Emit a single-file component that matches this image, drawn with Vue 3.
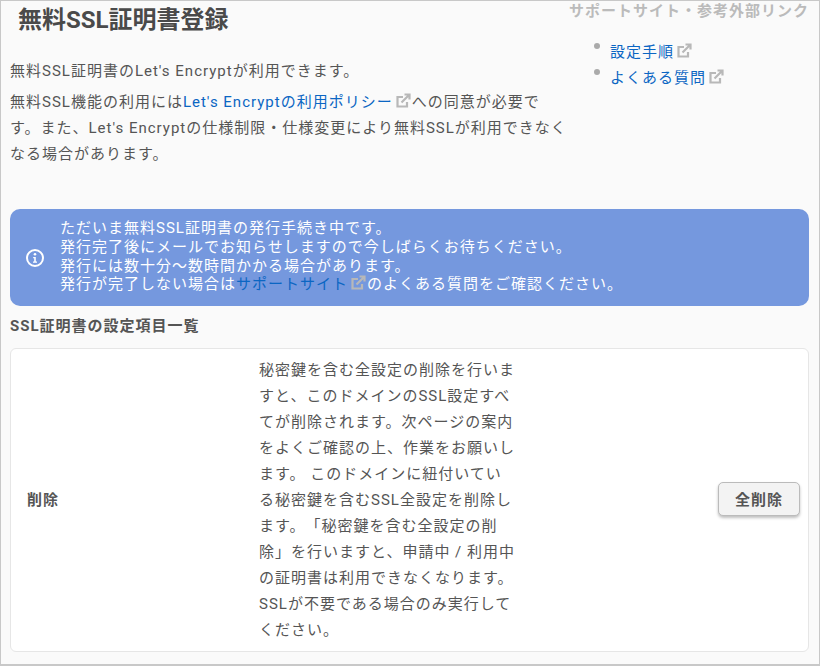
<script setup>
const links = ['設定手順', 'よくある質問']
const notices = [
  'ただいま無料SSL証明書の発行手続き中です。',
  '発行完了後にメールでお知らせしますので今しばらくお待ちください。',
  '発行には数十分〜数時間かかる場合があります。'
]
</script>

<template>
  <div class="page">
    <div class="top">
      <div class="intro">
        <h1 class="title">無料SSL証明書登録</h1>
        <p class="p1">無料SSL証明書のLet's Encryptが利用できます。</p>
        <p class="p2">無料SSL機能の利用には<a class="link">Let's Encryptの利用ポリシー</a><svg class="ext" viewBox="0 0 16 16"><path d="M12 9v4.5H2.5V4H8" fill="none" stroke="#b8b8b8" stroke-width="2.2"/><path d="M6.5 9.5L14 2M9.5 1.5h5v5" fill="none" stroke="#b8b8b8" stroke-width="2.2"/></svg>への同意が必要です。また、Let's Encryptの仕様制限・仕様変更により無料SSLが利用できなくなる場合があります。</p>
      </div>
      <div class="side">
        <div class="side-title">サポートサイト・参考外部リンク</div>
        <ul class="side-list">
          <li v-for="l in links" :key="l"><a class="link">{{ l }}</a><svg class="ext" viewBox="0 0 16 16"><path d="M12 9v4.5H2.5V4H8" fill="none" stroke="#b8b8b8" stroke-width="2.2"/><path d="M6.5 9.5L14 2M9.5 1.5h5v5" fill="none" stroke="#b8b8b8" stroke-width="2.2"/></svg></li>
        </ul>
      </div>
    </div>

    <div class="notice">
      <svg class="info" viewBox="0 0 20 20"><circle cx="10" cy="10" r="8" fill="none" stroke="#fff" stroke-width="2"/><circle cx="10" cy="6.3" r="1.3" fill="#fff"/><path d="M8.2 9h2.6v4.6h1.2v1.2H8v-1.2h1.2V10.2h-1z" fill="#fff"/></svg>
      <div class="notice-text">
        <div v-for="n in notices" :key="n">{{ n }}</div>
        <div>発行が完了しない場合は<a class="link">サポートサイト</a><svg class="ext" viewBox="0 0 16 16"><path d="M12 9v4.5H2.5V4H8" fill="none" stroke="#b8b8b8" stroke-width="2.2"/><path d="M6.5 9.5L14 2M9.5 1.5h5v5" fill="none" stroke="#b8b8b8" stroke-width="2.2"/></svg>のよくある質問をご確認ください。</div>
      </div>
    </div>

    <h2 class="sub">SSL証明書の設定項目一覧</h2>

    <div class="card">
      <div class="label">削除</div>
      <div class="desc">秘密鍵を含む全設定の削除を行いますと、このドメインのSSL設定すべてが削除されます。次ページの案内をよくご確認の上、作業をお願いします。 このドメインに紐付いている秘密鍵を含むSSL全設定を削除します。「秘密鍵を含む全設定の削除」を行いますと、申請中 / 利用中の証明書は利用できなくなります。SSLが不要である場合のみ実行してください。</div>
      <div class="action"><button class="btn">全削除</button></div>
    </div>
  </div>
</template>

<style>
html, body { margin: 0; padding: 0; }
</style>

<style scoped>
.page {
  box-sizing: border-box;
  width: 820px;
  height: 666px;
  border: 1px solid #c8c8c8;
  border-bottom-width: 2px;
  background: #fafafa;
  padding: 0 10px 0 9px;
  overflow: hidden;
  font-family: Roboto, "Noto Sans CJK JP", sans-serif;
  font-size: 15px;
  color: #555;
  letter-spacing: 1px;
  text-spacing-trim: space-all;
}
.top { display: flex; height: 208px; }
.intro { width: 560px; flex: none; }
.title {
  margin: 0 0 0 8px;
  font-size: 24px;
  line-height: 38px;
  font-weight: 700;
  letter-spacing: 0;
  color: #4a4a4a;
}
.p1 { margin: 19px 0 0; line-height: 26px; }
.p2 { margin: 5px 0 0; line-height: 26px; }
.link { color: #0b66c3; }
.ext { width: 16px; height: 16px; margin: 0 1px 0 2px; vertical-align: -2px; }
.side { flex: 1; position: relative; }
.side-title {
  position: absolute;
  right: 0;
  top: 1px;
  line-height: 18px;
  font-weight: 700;
  color: #bbb;
  white-space: nowrap;
}
.side-list { margin: 38px 0 0; padding: 0 0 0 40px; list-style: none; }
.side-list li { position: relative; line-height: 26px; }
.side-list li::before {
  content: "";
  position: absolute;
  left: -16px;
  top: 4px;
  width: 6px;
  height: 6px;
  border-radius: 50%;
  background: #aaa;
}
.notice {
  display: flex;
  align-items: center;
  background: #7598de;
  border-radius: 10px;
  height: 97px;
  color: #fff;
  padding-left: 15px;
  box-sizing: border-box;
}
.info { width: 20px; height: 20px; margin-right: 15px; flex: none; }
.notice-text { line-height: 18.6px; padding-bottom: 2px; }
.sub {
  margin: 9px 0 0;
  font-size: 15px;
  line-height: 22px;
  font-weight: 700;
  color: #555;
}
.card {
  box-sizing: border-box;
  margin-top: 11px;
  height: 304px;
  background: #fff;
  border: 1px solid #e6e6e6;
  border-radius: 6px;
  display: grid;
  grid-template-columns: 248px 257px 1fr;
  align-items: center;
}
.label { padding: 0 0 3px 16px; font-weight: 700; }
.desc { line-height: 26px; }
.action { display: flex; justify-content: flex-end; padding: 0 8px 2px 0; }
.btn {
  box-sizing: border-box;
  width: 82px;
  height: 34px;
  background: #f3f3f3;
  border: 1px solid #bbb;
  border-radius: 5px;
  box-shadow: 0 2px 3px rgba(0,0,0,.25);
  font: 700 15px Roboto, "Noto Sans CJK JP", sans-serif;
  letter-spacing: 1px;
  color: #555;
  padding: 0 0 2px;
}
</style>
